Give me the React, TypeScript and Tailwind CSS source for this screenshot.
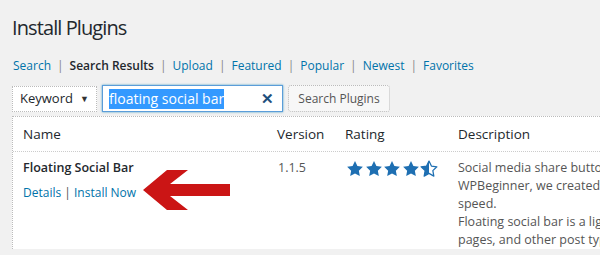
import React from "react";

const NAV = ["Search", "Search Results", "Upload", "Featured", "Popular", "Newest", "Favorites"];

const STAR = "M10 1.2l2.7 5.6 6.1.8-4.5 4.3 1.1 6.1-5.4-3-5.4 3 1.1-6.1L1.2 7.6l6.1-.8z";

function Star({ half }: { half?: boolean }) {
  return (
    <svg width="18" height="17" viewBox="0 0 20 19" className="shrink-0">
      <defs>
        <clipPath id="half-clip">
          <rect x="0" y="0" width="10" height="20" />
        </clipPath>
      </defs>
      {half ? (
        <>
          <path d={STAR} fill="none" stroke="#1e6fb2" strokeWidth="1.4" strokeLinejoin="round" />
          <path d={STAR} fill="#1e6fb2" clipPath="url(#half-clip)" />
        </>
      ) : (
        <path d={STAR} fill="#1e6fb2" />
      )}
    </svg>
  );
}

export default function App() {
  return (
    <div
      className="relative w-[600px] h-[255px] overflow-hidden bg-[#f1f1f1] text-[#23282d]"
      style={{ fontFamily: '"Open Sans", "Noto Sans", sans-serif' }}
    >
      <h1 className="pl-[12px] pt-[15px] text-[20px] leading-[26px] font-normal tracking-[-0.9px]">Install Plugins</h1>

      {/* filter links */}
      <ul className="mt-[16px] flex pl-[13px] text-[12px] leading-[18px] whitespace-nowrap">
        {NAV.map((item, i) => (
          <li key={item} className="flex">
            <span className={item === "Search Results" ? "font-semibold text-[#23282d]" : "text-[#0073aa]"}>{item}</span>
            {i < NAV.length - 1 && <span className="mx-[6px] text-[#888]">|</span>}
          </li>
        ))}
      </ul>

      {/* search form */}
      <div className="mt-[10px] flex items-center pl-[12px] h-[27px]">
        <div className="flex h-[26px] w-[85px] items-center justify-between border border-dotted border-[#bbb] bg-white pl-[7px] pr-[7px] text-[13px]">
          <span>Keyword</span>
          <span className="text-[9px] text-[#333]">▼</span>
        </div>
        <div className="ml-[5px] flex h-[27px] w-[181px] items-center justify-between border border-[#5b9dd9] bg-white pl-[6px] pr-[8px] shadow-[0_0_2px_rgba(30,140,190,0.8)]">
          <span className="bg-[#3399ff] text-[14px] leading-[20px] text-white">floating social bar</span>
          <span className="text-[15px] font-bold leading-none text-[#1d4f7c]">✕</span>
        </div>
        <button className="ml-[5px] h-[27px] w-[102px] rounded-[3px] border border-dotted border-[#bbb] bg-[#f7f7f7] text-[12px] text-[#555]">
          Search Plugins
        </button>
      </div>

      {/* results table */}
      <div className="ml-[12px] mt-[4px] w-[640px] border-l border-t border-dotted border-[#bbb] bg-white">
        <div className="grid h-[35px] grid-cols-[254px_68px_113px_1fr] items-center border-b border-dotted border-[#ccc] text-[13.5px]">
          <div className="pl-[10px]">Name</div>
          <div className="pl-[10px]">Version</div>
          <div className="pl-[10px]">Rating</div>
          <div className="pl-[10px]">Description</div>
        </div>
        <div className="grid grid-cols-[254px_68px_113px_1fr] pt-[7px] text-[13px] leading-[18px]">
          <div className="pl-[10px]">
            <div className="text-[12.5px] font-semibold">Floating Social Bar</div>
            <div className="mt-[7px] text-[12px] text-[#0073aa]">
              Details <span className="text-[#555]">|</span> Install Now
            </div>
          </div>
          <div className="pl-[11px] text-[12.5px] text-[#555]">1.1.5</div>
          <div className="flex gap-[0.5px] pl-[11px] pt-[1px]">
            <Star />
            <Star />
            <Star />
            <Star />
            <Star half />
          </div>
          <div className="pl-[10px] whitespace-nowrap text-[12.5px] text-[#555]">
            Social media share buttons are great for traffic. At
            <br />
            WPBeginner, we created this plugin without slowing page
            <br />
            speed.
            <br />
            Floating social bar is a lightweight plugin for posts,
            <br />
            pages, and other post types.
          </div>
        </div>
      </div>

      {/* red arrow overlay */}
      <svg className="absolute left-[140px] top-[166px]" width="94" height="48" viewBox="0 0 94 48">
        <polygon points="3,24 27,4 48,4 30,18 90,18 90,30 30,30 48,44 27,44" fill="#cb1515" />
      </svg>
    </div>
  );
}
